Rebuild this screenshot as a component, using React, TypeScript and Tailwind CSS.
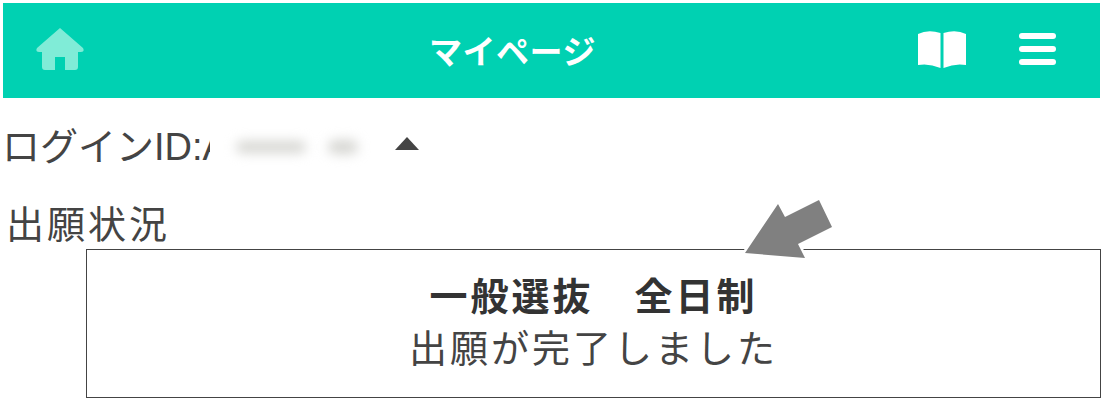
import React from "react";

const font = { fontFamily: '"Noto Sans CJK JP", "Noto Sans", sans-serif' };

function Home() {
  return (
    <svg width="48" height="42" viewBox="0 0 48 42" fill="#80ecd7">
      <path d="M24 0 L47 20 Q49 24 45 24 L42 24 L42 39 Q42 42 39 42 L29 42 L29 29 L19 29 L19 42 L9 42 Q6 42 6 39 L6 24 L3 24 Q-1 24 1 20 Z" />
    </svg>
  );
}

function Book() {
  return (
    <svg width="48" height="38" viewBox="0 0 48 38" fill="#ffffff">
      <path d="M0 4 Q10 -1 22.5 3 L22.5 38 Q11 33 0 35 Z" />
      <path d="M48 4 Q38 -1 25.5 3 L25.5 38 Q37 33 48 35 Z" />
    </svg>
  );
}

export default function App() {
  return (
    <div className="relative w-[1105px] h-[411px] overflow-hidden bg-white text-[#444444]" style={font}>
      <div className="pt-[3px] pl-[3px] pr-[5px]">
        <header className="h-[95px] bg-[#00d1b2] flex items-center justify-between pl-[33px] pr-[44px]">
          <div className="mb-[3px]"><Home /></div>
          <span className="text-[33px] tracking-[0.5px] font-bold text-white ml-[23px]">マイページ</span>
          <div className="flex items-center gap-[53px] mb-[3px]">
            <Book />
            <div className="flex flex-col gap-[7px] w-[37px]">
              <div className="h-[6px] rounded-full bg-white" />
              <div className="h-[6px] rounded-full bg-white" />
              <div className="h-[6px] rounded-full bg-white" />
            </div>
          </div>
        </header>
      </div>

      <div className="relative mt-[24px] pl-[2px] flex items-center h-[50px]">
        <span className="text-[38px] leading-[50px] whitespace-nowrap" style={{ fontFamily: '"Liberation Sans", "Noto Sans CJK JP", sans-serif' }}>ログインID:A</span>
        <div className="absolute left-[210px] top-[4px] w-[157px] h-[37px] bg-white flex items-center pt-[4px]">
          <div className="ml-[26px] w-[70px] h-[12px] rounded-full bg-[#d6d6d2] blur-[6px]" />
          <div className="ml-[22px] w-[30px] h-[14px] rounded-full bg-[#d6d6d2] blur-[6px]" />
        </div>
        <div className="absolute left-[395px] top-[15px] w-0 h-0 border-l-[12px] border-r-[12px] border-b-[13px] border-l-transparent border-r-transparent border-b-[#444444]" />
      </div>

      <div className="mt-[25px] pl-[6px] text-[38px] leading-[50px] tracking-[3px] whitespace-nowrap">出願状況</div>

      <div className="ml-[86px] mr-[4px] mt-[2px] h-[149px] border-[1.5px] border-[#444444] flex flex-col items-center pt-[18px]">
        <div className="text-[38px] leading-[52px] font-bold tracking-[3px] whitespace-pre text-[#333333]">一般選抜　全日制</div>
        <div className="text-[38px] leading-[52px] tracking-[3px] whitespace-nowrap">出願が完了しました</div>
      </div>

      <svg className="absolute left-[735px] top-[195px]" width="105" height="70" viewBox="735 195 105 70">
        <polygon
          points="745,253 778,204 785,217 819,200 832,227 798,244 805,258"
          fill="#808080"
          stroke="#ffffff"
          strokeWidth="5"
          paintOrder="stroke"
        />
      </svg>
    </div>
  );
}
